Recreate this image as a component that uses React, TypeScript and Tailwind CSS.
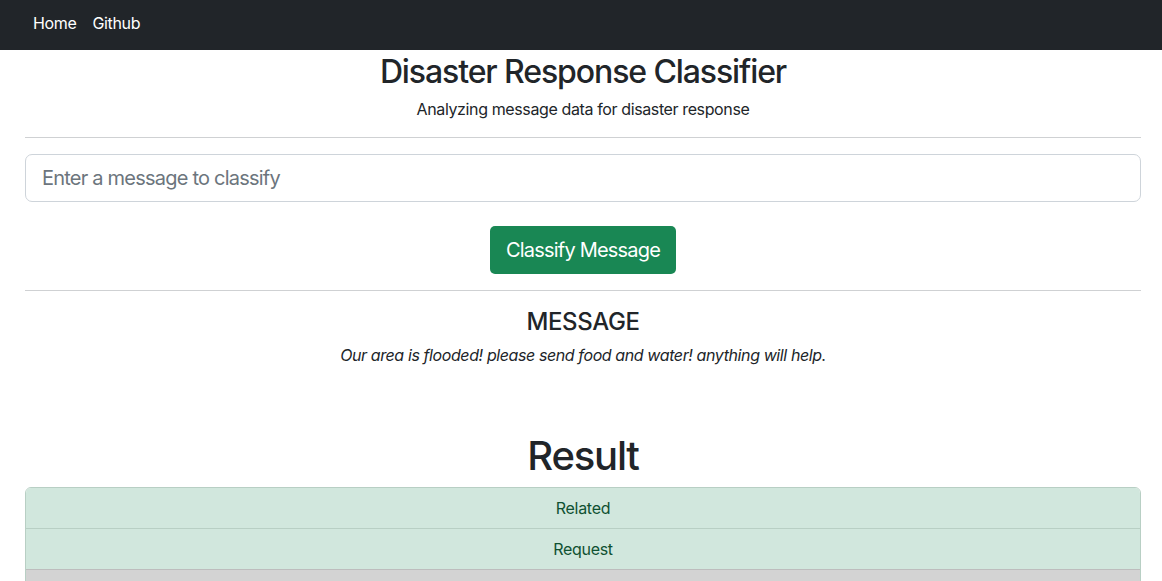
const font = { fontFamily: "Inter, 'Liberation Sans', sans-serif" };

const results = [
  { label: "Related", on: true },
  { label: "Request", on: true },
  { label: "Offer", on: false },
];

export default function App() {
  return (
    <div className="min-h-screen bg-white text-[#212529]" style={font}>
      {/* navbar */}
      <nav className="flex h-[50px] items-center gap-[16px] bg-[#212529] px-[33px] pb-[4px]">
        <a className="text-[16px] tracking-[-0.35px] text-white">Home</a>
        <a className="text-[16px] tracking-[-0.35px] text-white">Github</a>
      </nav>

      <div className="mx-[25px] w-[1116px]">
        <div className="pt-[3px] text-center">
          <h1 className="text-[32px] font-medium leading-[38px] tracking-[-1.1px]">
            Disaster Response Classifier
          </h1>
          <p className="mt-[6px] text-[16px] leading-[24px] tracking-[-0.38px]">
            Analyzing message data for disaster response
          </p>
        </div>
        <hr className="mt-[16px] border-t border-[#cfd1d3]" />

        <input
          className="mt-[16px] block h-[48px] w-full rounded-[7px] border border-[#ced4da] px-4 text-[20px] tracking-[-0.78px] text-[#212529] placeholder:text-[#6c757d] outline-none"
          placeholder="Enter a message to classify"
          style={font}
        />
        <div className="mt-[24px] flex justify-center">
          <button className="h-[48px] rounded-[5px] bg-[#198754] px-4 text-[20px] tracking-[-0.8px] text-white">
            Classify Message
          </button>
        </div>
        <hr className="mt-[16px] border-t border-[#cfd1d3]" />

        <div className="text-center">
          <h3 className="mt-[16px] text-[24px] font-medium leading-[30px] tracking-[-0.4px]">MESSAGE</h3>
          <p className="mt-[6px] text-[16px] italic leading-[24px] tracking-[-0.4px]">
            Our area is flooded! please send food and water! anything will help.
          </p>
          <h1 className="mt-[65px] text-[40px] font-medium leading-[48px] tracking-[-1.2px]">Result</h1>
        </div>

        <ul className="mt-[7px] overflow-hidden rounded-[6px] border border-[#b8cfc4]">
          {results.map((r, i) => (
            <li
              key={r.label}
              className={`py-2 text-center text-[16px] leading-[24px] tracking-[-0.3px] ${i > 0 ? "border-t" : ""} ${
                r.on
                  ? "border-[#b8cfc4] bg-[#d1e7dd] text-[#0f5132]"
                  : "border-[#bdbdbd] bg-[#d3d3d3] text-[#212529]"
              }`}
            >
              {r.label}
            </li>
          ))}
        </ul>
      </div>
    </div>
  );
}
